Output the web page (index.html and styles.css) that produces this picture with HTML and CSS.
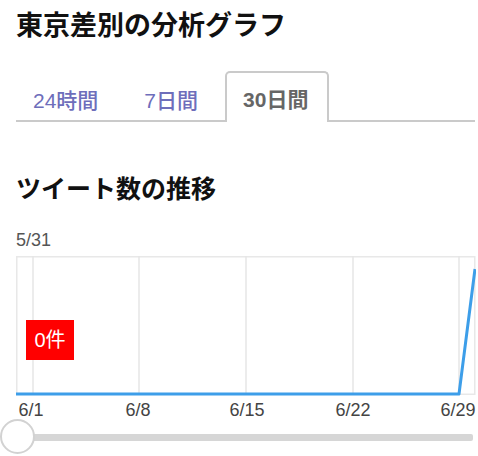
FILE: index.html
```html
<!DOCTYPE html>
<html lang="ja">
<head>
<meta charset="utf-8">
<link rel="stylesheet" href="styles.css">
</head>
<body>
<div class="page">
  <h1 class="title">東京差別の分析グラフ</h1>
  <div class="tabs">
    <div class="tab">24時間</div>
    <div class="tab">7日間</div>
    <div class="tab active">30日間</div>
  </div>
  <h2 class="subtitle">ツイート数の推移</h2>
  <div class="start-date">5/31</div>
  <div class="chart">
    <svg class="chart-svg" width="460" height="164" viewBox="0 0 460 164">
      <rect x="0.75" y="0.75" width="458" height="137.5" fill="#fff" stroke="#e8e8e8" stroke-width="1.5"/>
      <g stroke="#e6e6e6" stroke-width="1.5">
        <line x1="17" y1="0" x2="17" y2="138"/>
        <line x1="123" y1="0" x2="123" y2="138"/>
        <line x1="230" y1="0" x2="230" y2="138"/>
        <line x1="337" y1="0" x2="337" y2="138"/>
        <line x1="443" y1="0" x2="443" y2="138"/>
      </g>
      <polyline points="0,138 443,138 459,13" fill="none" stroke="#3d9ee9" stroke-width="3" stroke-linejoin="round"/>
      <g class="axis-labels">
        <text x="15" y="160" text-anchor="middle">6/1</text>
        <text x="122" y="160" text-anchor="middle">6/8</text>
        <text x="231" y="160" text-anchor="middle">6/15</text>
        <text x="337" y="160" text-anchor="middle">6/22</text>
        <text x="442" y="160" text-anchor="middle">6/29</text>
      </g>
    </svg>
    <div class="badge">0件</div>
  </div>
  <div class="slider">
    <div class="track"></div>
    <div class="thumb"></div>
  </div>
</div>
</body>
</html>
```

FILE: styles.css
```css
html, body {
  margin: 0;
  padding: 0;
  background: #fff;
}
body {
  font-family: "Liberation Sans", "Noto Sans CJK JP", sans-serif;
  color: #111;
}
.page {
  padding: 0 3px 0 16px;
  width: 459px;
  overflow: hidden;
}
.title {
  margin: 0;
  padding-top: 12px;
  font-size: 27px;
  line-height: 29px;
  font-weight: bold;
  color: #111;
}
.tabs {
  margin-top: 30px;
  display: flex;
  align-items: flex-end;
  border-bottom: 2px solid #cacaca;
  height: 49px;
}
.tab {
  height: 49px;
  box-sizing: border-box;
  padding: 0 15px;
  margin-right: 10px;
  display: flex;
  align-items: center;
  font-size: 21px;
  font-weight: 500;
  color: #6e6ebb;
  margin-bottom: -2px;
  border: 2px solid transparent;
  border-bottom: none;
}
.tab:first-child {
  margin-right: 12px;
}
.tab.active {
  color: #666;
  font-weight: bold;
  background: #fff;
  border-color: #cacaca;
  border-radius: 5px 5px 0 0;
  height: 51px;
  padding: 0 19px 0 16px;
}
.subtitle {
  margin: 54px 0 0;
  font-size: 25px;
  line-height: 27px;
  font-weight: bold;
  color: #111;
}
.start-date {
  margin-top: 27px;
  font-size: 18px;
  line-height: 20px;
  color: #555;
}
.chart {
  position: relative;
  margin-top: 6px;
  height: 164px;
}
.chart-svg {
  display: block;
}
.axis-labels text {
  font-family: "Liberation Sans", sans-serif;
  font-size: 18px;
  fill: #444;
}
.badge {
  position: absolute;
  left: 10px;
  top: 64px;
  width: 48px;
  height: 40px;
  background: #ff0000;
  color: #fff;
  font-size: 20px;
  line-height: 40px;
  text-align: center;
}
.slider {
  position: relative;
  height: 36px;
  margin-top: -1px;
}
.track {
  position: absolute;
  left: 4px;
  right: 2px;
  top: 15px;
  height: 7px;
  background: #d6d6d6;
  border-radius: 2px;
}
.thumb {
  position: absolute;
  left: -16px;
  top: 0;
  width: 31px;
  height: 31px;
  border: 2px solid #d2d2d2;
  border-radius: 50%;
  background: #fff;
}
```
